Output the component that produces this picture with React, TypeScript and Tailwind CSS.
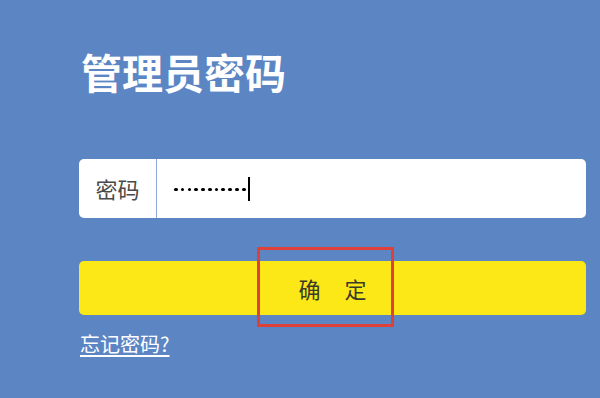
export default function App() {
  const dots = Array.from({ length: 11 });

  return (
    <div
      className="w-[600px] h-[398px] bg-[#5c85c4] overflow-hidden relative"
      style={{ fontFamily: '"Noto Sans CJK SC", "Liberation Sans", sans-serif' }}
    >
      <div className="pl-[79px] pr-[14px] pt-[43px]">
        <h1 className="text-[41px] leading-[57px] font-bold text-white pl-[2px]">管理员密码</h1>

        {/* password field */}
        <div className="mt-[59px] h-[59px] flex bg-white rounded-[5px] overflow-hidden">
          <div className="w-[78px] flex items-center justify-center text-[22px] text-[#4a4a4a] border-r border-[#8eaad6]">
            密码
          </div>
          <div className="flex-1 flex items-center pl-[17px]">
            <div className="flex items-center gap-[3.1px] mt-[2px]">
              {dots.map((_, i) => (
                <span key={i} className="w-[3.7px] h-[3.7px] rounded-full bg-black" />
              ))}
            </div>
            <span className="ml-[2px] w-[2px] h-[24px] bg-black" />
          </div>
        </div>

        {/* submit */}
        <button className="mt-[43px] w-full h-[54px] bg-[#fce816] rounded-[5px] flex items-center justify-center gap-[24px] text-[22px] text-[#3a3a2a]">
          <span>确</span>
          <span>定</span>
        </button>

        <a className="mt-[15px] inline-block text-[20px] leading-[28px] text-white underline underline-offset-[3px] pl-[1px]">
          忘记密码?
        </a>
      </div>

      {/* highlight box */}
      <div className="absolute left-[257px] top-[247px] w-[137px] h-[80px] border-[3px] border-[#e0403a]" />
    </div>
  );
}
